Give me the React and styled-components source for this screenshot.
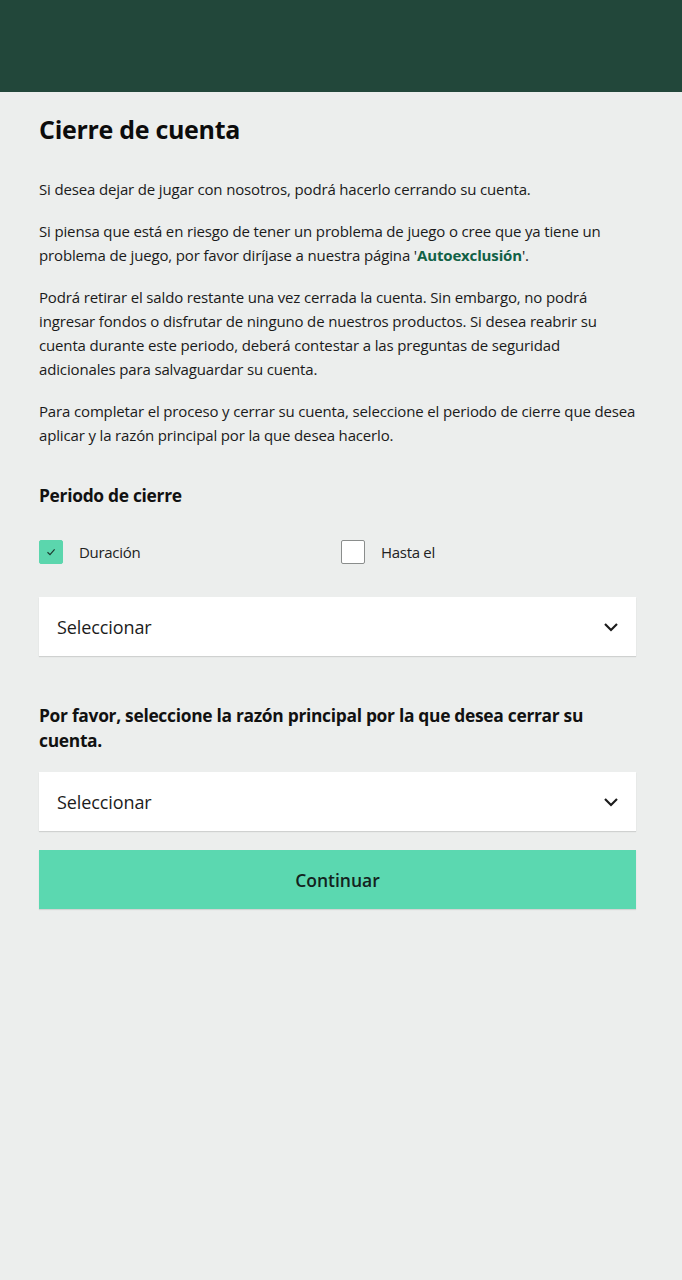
import styled, { createGlobalStyle } from "styled-components";

const GlobalStyle = createGlobalStyle`
	html, body {
		margin: 0;
		padding: 0;
		background: #eceeed;
	}
	body {
		font-family: "Open Sans", "Noto Sans", sans-serif;
		color: #111;
	}
`;

const Page = styled.div`
	min-height: 1280px;
	background: #eceeed;
`;

const TopBar = styled.header`
	height: 92px;
	background: #22473a;
`;

const Content = styled.main`
	display: flex;
	flex-direction: column;
	padding: 19px 46px 0 39px;
`;

const Title = styled.h1`
	margin: 0 0 30px;
	font-size: 25px;
	font-weight: 700;
	letter-spacing: -0.3px;
	line-height: 36px;
	color: #0c0c0c;
`;

const Text = styled.p`
	margin: 0 0 18px;
	font-size: 15px;
	line-height: 24px;
	letter-spacing: -0.15px;
	color: #1a1a1a;
`;

const Link = styled.a`
	color: #116146;
	font-weight: 700;
	text-decoration: none;
`;

const SectionTitle = styled.h2`
	margin: ${(p) => p.$top || "18px"} 0 0;
	font-size: 17.4px;
	font-weight: 700;
	line-height: 25px;
	letter-spacing: -0.3px;
	color: #111;
`;

const OptionRow = styled.div`
	display: grid;
	grid-template-columns: 302px 1fr;
	margin: 32px 0 33px;
`;

const Option = styled.label`
	display: flex;
	align-items: center;
	gap: 16px;
	font-size: 15px;
	letter-spacing: -0.3px;
	color: #222;
`;

const Box = styled.span`
	display: flex;
	align-items: center;
	justify-content: center;
	width: 24px;
	height: 24px;
	box-sizing: border-box;
	border-radius: 2px;
	background: ${(p) => (p.$checked ? "#5bd6ad" : "#fff")};
	border: 1px solid ${(p) => (p.$checked ? "#5bd6ad" : "#8a8d8c")};
`;

const Select = styled.div`
	display: flex;
	align-items: center;
	justify-content: space-between;
	height: 59px;
	padding: 0 16px 0 18px;
	background: #fff;
	box-shadow: 0 1px 1px rgba(0, 0, 0, 0.12);
	font-size: 18px;
	font-weight: 500;
	letter-spacing: -0.1px;
	color: #1c1c1c;
	margin-top: ${(p) => p.$top || "0"};
`;

const Button = styled.button`
	margin-top: 19px;
	height: 59px;
	border: none;
	background: #5bd8b0;
	font-family: inherit;
	font-size: 17.5px;
	font-weight: 600;
	color: #13231d;
	box-shadow: 0 1px 1px rgba(0, 0, 0, 0.1);
`;

function Check() {
	return (
		<svg width="10" height="10" viewBox="0 0 10 10" fill="none">
			<path d="M1.5 5.2 L4 7.6 L8.6 2.4" stroke="#1d3b30" strokeWidth="1.2" />
		</svg>
	);
}

function Chevron() {
	return (
		<svg width="18" height="18" viewBox="0 0 18 18" fill="none">
			<path d="M3 6 L9 12 L15 6" stroke="#1c1c1c" strokeWidth="2.2" />
		</svg>
	);
}

export default function App() {
	return (
		<Page>
			<GlobalStyle />
			<TopBar />
			<Content>
				<Title>Cierre de cuenta</Title>
				<Text>Si desea dejar de jugar con nosotros, podrá hacerlo cerrando su cuenta.</Text>
				<Text>
					Si piensa que está en riesgo de tener un problema de juego o cree que ya tiene un
					problema de juego, por favor diríjase a nuestra página '<Link href="#">Autoexclusión</Link>'.
				</Text>
				<Text>
					Podrá retirar el saldo restante una vez cerrada la cuenta. Sin embargo, no podrá
					ingresar fondos o disfrutar de ninguno de nuestros productos. Si desea reabrir su
					cuenta durante este periodo, deberá contestar a las preguntas de seguridad
					adicionales para salvaguardar su cuenta.
				</Text>
				<Text>
					Para completar el proceso y cerrar su cuenta, seleccione el periodo de cierre que desea
					aplicar y la razón principal por la que desea hacerlo.
				</Text>

				<SectionTitle>Periodo de cierre</SectionTitle>
				<OptionRow>
					<Option>
						<Box $checked>
							<Check />
						</Box>
						Duración
					</Option>
					<Option>
						<Box />
						Hasta el
					</Option>
				</OptionRow>
				<Select>
					Seleccionar
					<Chevron />
				</Select>

				<SectionTitle $top="47px">
					Por favor, seleccione la razón principal por la que desea cerrar su cuenta.
				</SectionTitle>
				<Select $top="19px">
					Seleccionar
					<Chevron />
				</Select>
				<Button>Continuar</Button>
			</Content>
		</Page>
	);
}
